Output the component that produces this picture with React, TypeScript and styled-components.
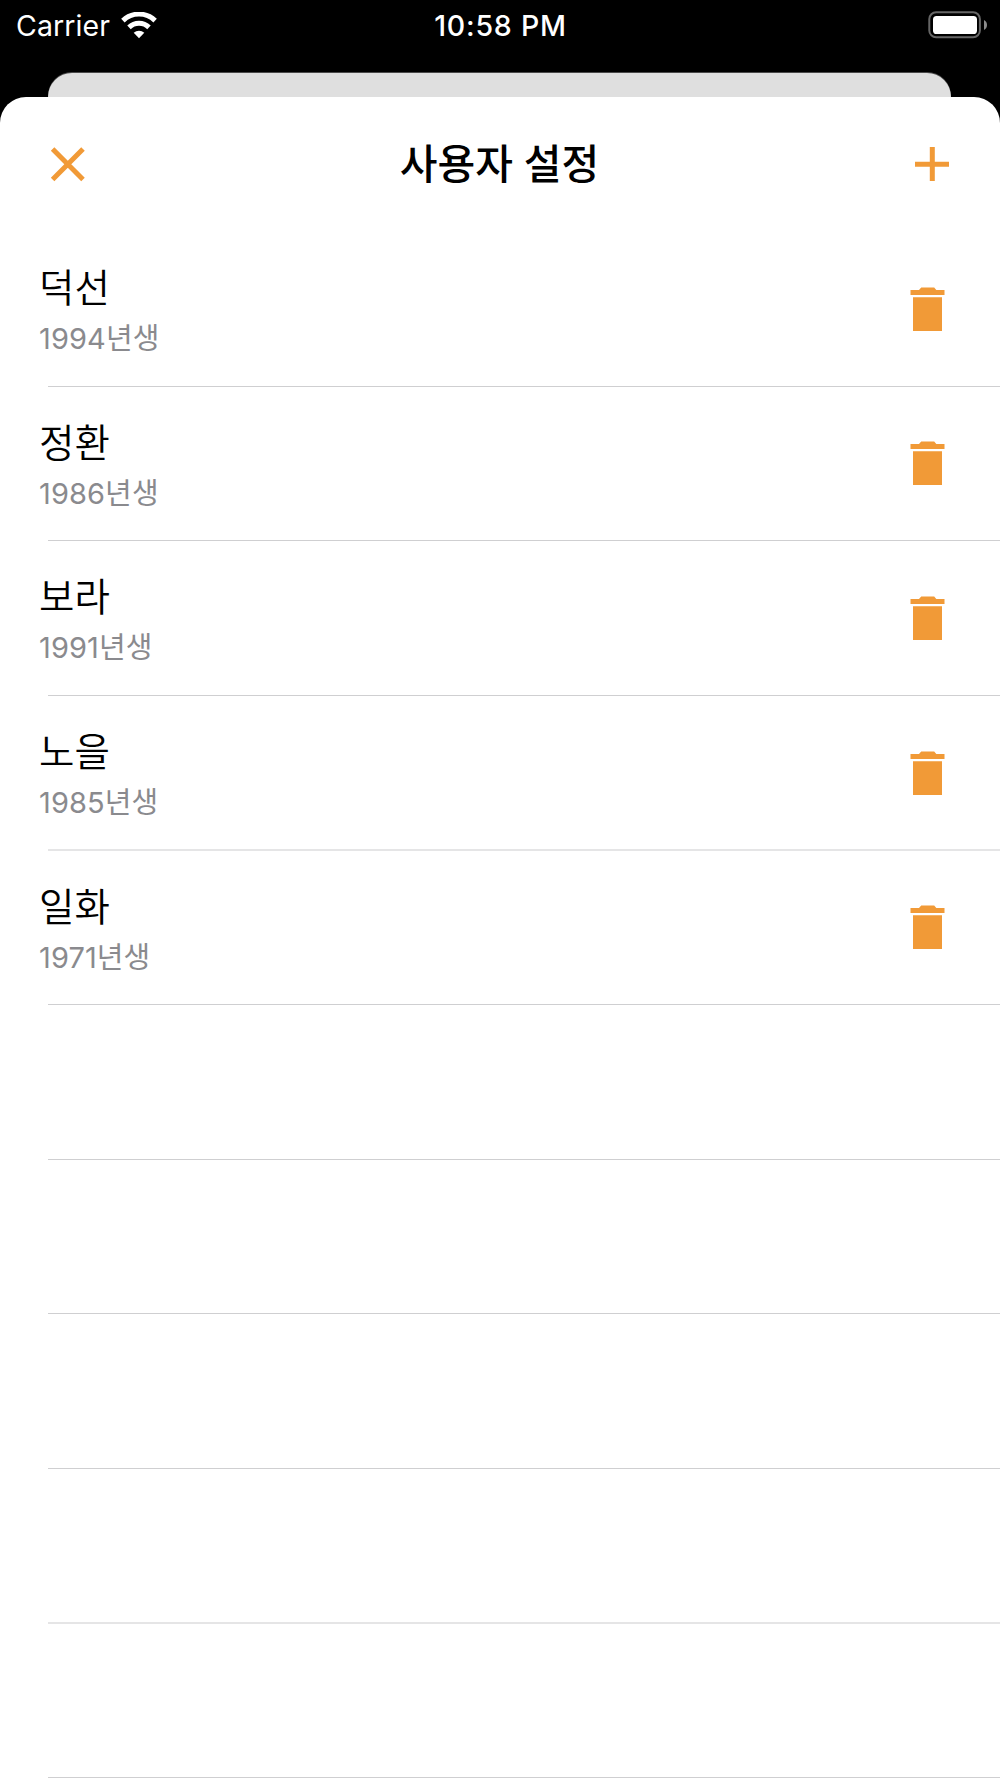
import React from 'react';
import styled, { createGlobalStyle } from 'styled-components';

const ACCENT = '#f19a37';

const GlobalStyle = createGlobalStyle`
  * { box-sizing: border-box; }
  body { margin: 0; background: #000; overflow: hidden; }
`;

const Screen = styled.div`
  display: flex;
  flex-direction: column;
  width: 1000px;
  height: 1778px;
  overflow: hidden;
  background: #000;
  font-family: Inter, 'Noto Sans CJK KR', sans-serif;
`;

const StatusBar = styled.header`
  display: grid;
  grid-template-columns: 1fr auto 1fr;
  align-items: center;
  flex: none;
  height: 50px;
  margin-bottom: 23px;
  padding: 0 13px 0 16px;
  color: #fff;
`;

const Network = styled.div`
  display: flex;
  align-items: center;
  gap: 11px;
`;

const Carrier = styled.span`
  padding-top: 2px;
  font-size: 28.5px;
  font-weight: 385;
  line-height: 48px;
  letter-spacing: 0.1px;
`;

const Clock = styled.time`
  padding: 2px 2px 0 0;
  font-size: 28.5px;
  font-weight: 500;
  line-height: 48px;
  letter-spacing: 0.8px;
`;

const Battery = styled.svg`
  justify-self: end;
  margin-bottom: 1px;
`;

const BackCard = styled.div`
  flex: none;
  height: 24px;
  margin: 0 49px 0 48px;
  border-radius: 24px 24px 0 0;
  background: #dfdfdf;
  box-shadow: 0 -1px 0 #4a4a4a;
`;

const Sheet = styled.main`
  display: flex;
  flex-direction: column;
  flex: 1;
  min-height: 0;
  border-radius: 26px 26px 0 0;
  background: #fff;
`;

const NavBar = styled.nav`
  display: grid;
  grid-template-columns: 1fr auto 1fr;
  align-items: center;
  flex: none;
  height: 134px;
  margin-bottom: 1px;
  padding: 0 51px 0 50px;
`;

const Title = styled.h1`
  margin: 0;
  font-size: 41px;
  font-weight: 500;
  line-height: 60px;
`;

const IconButton = styled.button<{ $end?: boolean }>`
  display: flex;
  justify-self: ${(p) => (p.$end ? 'end' : 'start')};
  padding: 0;
  border: 0;
  background: none;
  color: ${ACCENT};
`;

const List = styled.ul`
  flex: none;
  margin: 0;
  padding: 0;
  list-style: none;
`;

const Row = styled.li`
  display: flex;
  flex-direction: column;
  height: 154.6px;
`;

const RowBody = styled.div`
  display: flex;
  align-items: center;
  justify-content: space-between;
  flex: 1;
  padding: 0 55px 0 39px;
`;

const Separator = styled.div<{ $soft?: boolean }>`
  flex: none;
  height: ${(p) => (p.$soft ? 2 : 1)}px;
  margin: 0 0 ${(p) => (p.$soft ? -1 : 0)}px 48px;
  background: ${(p) => (p.$soft ? '#e5e5e6' : '#cfcfd1')};
`;

const Person = styled.div`
  display: flex;
  flex-direction: column;
  gap: 6px;
  padding-top: 5px;
`;

const Name = styled.span`
  font-size: 38.5px;
  font-weight: 350;
  line-height: 50px;
  color: #000;
`;

const Birth = styled.span`
  font-size: 29px;
  font-weight: 385;
  line-height: 40px;
  letter-spacing: 0.1px;
  color: #8a8a8e;
`;

const people = [
  { name: '덕선', year: 1994 },
  { name: '정환', year: 1986 },
  { name: '보라', year: 1991 },
  { name: '노을', year: 1985 },
  { name: '일화', year: 1971 },
];
const EMPTY_ROWS = 5;

const isSoft = (index: number) => index % 5 === 3;

const WifiIcon = () => (
  <svg width="36" height="27" viewBox="0 0 36 27" fill="none" stroke="#fff">
    <path d="M1.9 8.6a23.2 23.2 0 0 1 32.2 0" strokeWidth="5" />
    <path d="M8 15.4a14.4 14.4 0 0 1 20 0" strokeWidth="5" />
    <path d="M12.7 20.8a8 8 0 0 1 10.6 0L18 26.3z" fill="#fff" stroke="none" />
  </svg>
);

const BatteryIcon = () => (
  <Battery width="59" height="28" viewBox="0 0 59 28">
    <rect x="1.3" y="1.3" width="50.6" height="25" rx="6.8" fill="none" stroke="#666" strokeWidth="2" />
    <rect x="5" y="5" width="44" height="18" rx="3.6" fill="#fff" />
    <path d="M56 9q3 1.6 3 5t-3 5z" fill="#8c8c8c" />
  </Battery>
);

const CloseIcon = () => (
  <svg width="36" height="36" viewBox="0 0 36 36" stroke="currentColor" strokeWidth="5">
    <path d="M2.6 3l30.4 30.4M33 3L2.6 33.4" />
  </svg>
);

const AddIcon = () => (
  <svg width="34" height="34" viewBox="0 0 34 34" stroke="currentColor" strokeWidth="5">
    <path d="M0 17.3h34M17.3 0v34" />
  </svg>
);

const TrashIcon = () => (
  <svg width="35" height="44" viewBox="0 0 35 44" fill="currentColor">
    <path d="M.5 3H9L11.2.4h13L26.3 3h8.2v5H.5zM3 10.2h29V44H3z" />
  </svg>
);

export default function App() {
  return (
    <Screen>
      <GlobalStyle />
      <StatusBar>
        <Network>
          <Carrier>Carrier</Carrier>
          <WifiIcon />
        </Network>
        <Clock>10:58 PM</Clock>
        <BatteryIcon />
      </StatusBar>
      <BackCard />
      <Sheet>
        <NavBar>
          <IconButton aria-label="닫기"><CloseIcon /></IconButton>
          <Title>사용자 설정</Title>
          <IconButton $end aria-label="추가"><AddIcon /></IconButton>
        </NavBar>
        <List>
          {people.map((p, i) => (
            <Row key={p.name}>
              <RowBody>
                <Person>
                  <Name>{p.name}</Name>
                  <Birth>{p.year}년생</Birth>
                </Person>
                <IconButton aria-label="삭제"><TrashIcon /></IconButton>
              </RowBody>
              <Separator $soft={isSoft(i)} />
            </Row>
          ))}
          {Array.from({ length: EMPTY_ROWS }, (_, i) => (
            <Row key={i}>
              <RowBody />
              <Separator $soft={isSoft(i + people.length)} />
            </Row>
          ))}
        </List>
      </Sheet>
    </Screen>
  );
}
